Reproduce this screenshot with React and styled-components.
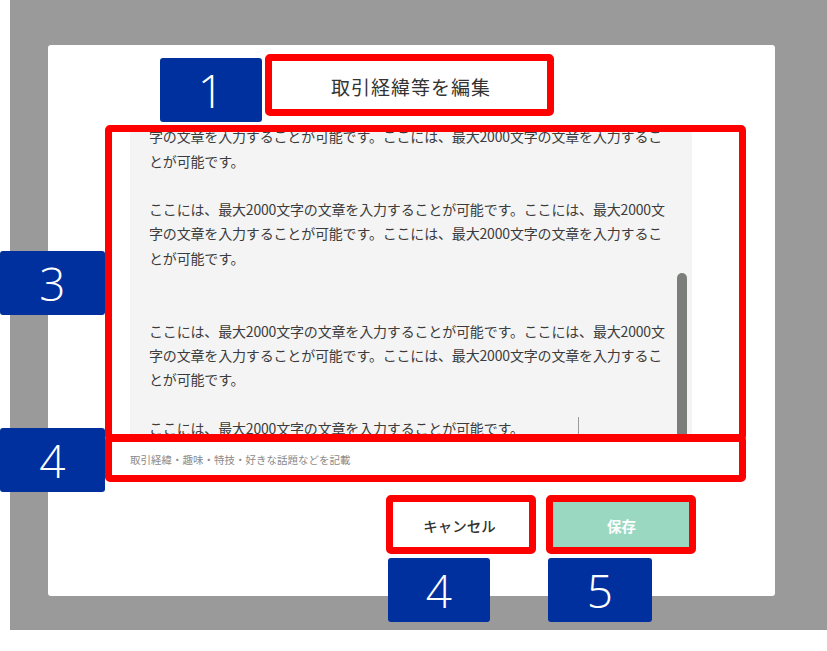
import React from 'react';
import styled, { createGlobalStyle } from 'styled-components';

const GlobalStyle = createGlobalStyle`
  html, body {
    margin: 0;
    padding: 0;
    background: #fff;
  }
  body {
    font-family: "Noto Sans CJK JP", "Noto Sans", sans-serif;
  }
`;

const Page = styled.div`
  position: relative;
  width: 827px;
  height: 651px;
  background: #fff;
  overflow: hidden;
`;

const Backdrop = styled.div`
  margin-left: 10px;
  width: 817px;
  height: 630px;
  box-sizing: border-box;
  padding: 45px 52px 34px 38px;
  background: #9a9a9a;
`;

const Card = styled.div`
  height: 100%;
  box-sizing: border-box;
  padding: 22px 83px 46px 82px;
  background: #fff;
  border-radius: 3px;
  display: flex;
  flex-direction: column;
`;

const Title = styled.h2`
  margin: 0;
  height: 40px;
  line-height: 40px;
  text-align: center;
  font-size: 19px;
  font-weight: 400;
  letter-spacing: 1px;
  color: #333;
`;

const TextBox = styled.div`
  position: relative;
  margin-top: 19px;
  height: 311px;
  background: #f4f4f4;
  overflow: hidden;
`;

const TextBody = styled.div`
  margin-top: -26px;
  padding: 0 19px;
  font-size: 14px;
  line-height: 24.3px;
  letter-spacing: -0.17px;
  color: #3c3c3c;
  white-space: pre;
`;

const Thumb = styled.div`
  position: absolute;
  top: 147px;
  right: 5px;
  width: 10px;
  height: 180px;
  border-radius: 5px;
  background: #7b7e7b;
`;

const Caret = styled.div`
  position: absolute;
  left: 448px;
  top: 291px;
  width: 1px;
  height: 20px;
  background: #9a9a9a;
`;

const Helper = styled.p`
  margin: 14px 0 0;
  line-height: 18px;
  font-size: 10.5px;
  color: #8a8a8a;
`;

const Actions = styled.div`
  margin-top: 31px;
  display: flex;
  justify-content: flex-end;
  gap: 21px;
`;

const Button = styled.button`
  width: 141px;
  height: 50px;
  border: none;
  border-radius: 2px;
  font-family: "Noto Sans CJK JP", sans-serif;
  font-size: 14.5px;
  font-weight: ${p => (p.primary ? 700 : 500)};
  color: ${p => (p.primary ? '#fff' : '#333')};
  background: ${p => (p.primary ? '#9ad8c1' : '#fff')};
  cursor: pointer;
`;

// annotation overlays
const Mark = styled.div`
  position: absolute;
  left: ${p => p.x}px;
  top: ${p => p.y}px;
  width: ${p => p.w}px;
  height: ${p => p.h}px;
  box-sizing: border-box;
  border: 7px solid #ff0000;
  border-radius: 5px;
`;

const Badge = styled.div`
  position: absolute;
  left: ${p => p.x}px;
  top: ${p => p.y}px;
  width: ${p => p.w}px;
  height: 64px;
  border-radius: 3px;
  background: #00309e;
  color: #fff;
  display: flex;
  align-items: center;
  justify-content: center;
  font-family: "Open Sans", "DejaVu Sans", sans-serif;
  font-weight: 300;
  font-size: 46px;
`;

const lines = [
  'ここには、最大2000文字の文章を入力することが可能です。ここには、最大2000文',
  '字の文章を入力することが可能です。ここには、最大2000文字の文章を入力するこ',
  'とが可能です。',
  '',
  'ここには、最大2000文字の文章を入力することが可能です。ここには、最大2000文',
  '字の文章を入力することが可能です。ここには、最大2000文字の文章を入力するこ',
  'とが可能です。',
  '',
  '',
  'ここには、最大2000文字の文章を入力することが可能です。ここには、最大2000文',
  '字の文章を入力することが可能です。ここには、最大2000文字の文章を入力するこ',
  'とが可能です。',
  '',
  'ここには、最大2000文字の文章を入力することが可能です。',
];

export default function App() {
  return (
    <Page>
      <GlobalStyle />
      <Backdrop>
        <Card>
          <Title>取引経緯等を編集</Title>
          <TextBox>
            <TextBody>{lines.join('\n')}</TextBody>
            <Caret />
            <Thumb />
          </TextBox>
          <Helper>取引経緯・趣味・特技・好きな話題などを記載</Helper>
          <Actions>
            <Button>キャンセル</Button>
            <Button primary>保存</Button>
          </Actions>
        </Card>
      </Backdrop>

      <Mark x={265} y={54} w={289} h={62} />
      <Mark x={105} y={125} w={641} h={316} />
      <Mark x={105} y={435} w={641} h={47} />
      <Mark x={386} y={495} w={150} h={59} />
      <Mark x={546} y={495} w={150} h={59} />

      <Badge x={160} y={58} w={102}>1</Badge>
      <Badge x={0} y={251} w={105}>3</Badge>
      <Badge x={0} y={428} w={105}>4</Badge>
      <Badge x={388} y={558} w={102}>4</Badge>
      <Badge x={548} y={558} w={104}>5</Badge>
    </Page>
  );
}
